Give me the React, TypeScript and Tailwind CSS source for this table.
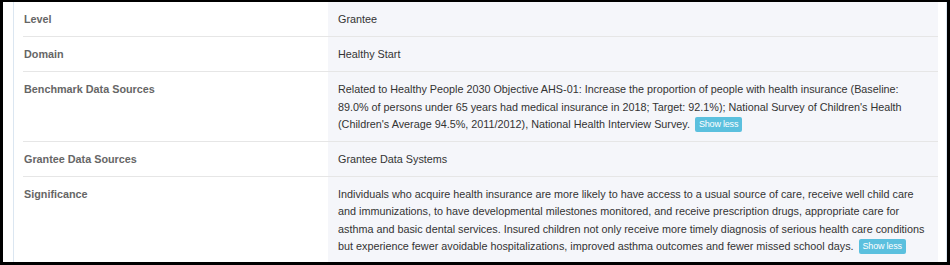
const rows: { label: string; value: string; more?: boolean }[] = [
  { label: "Level", value: "Grantee" },
  { label: "Domain", value: "Healthy Start" },
  {
    label: "Benchmark Data Sources",
    value:
      "Related to Healthy People 2030 Objective AHS-01: Increase the proportion of people with health insurance (Baseline: 89.0% of persons under 65 years had medical insurance in 2018; Target: 92.1%); National Survey of Children's Health (Children's Average 94.5%, 2011/2012), National Health Interview Survey.",
    more: true,
  },
  { label: "Grantee Data Sources", value: "Grantee Data Systems" },
  {
    label: "Significance",
    value:
      "Individuals who acquire health insurance are more likely to have access to a usual source of care, receive well child care and immunizations, to have developmental milestones monitored, and receive prescription drugs, appropriate care for asthma and basic dental services. Insured children not only receive more timely diagnosis of serious health care conditions but experience fewer avoidable hospitalizations, improved asthma outcomes and fewer missed school days.",
    more: true,
  },
];

function ShowLess() {
  return (
    <button className="ml-[5px] inline-block rounded-[2px] bg-[#5bc0de] px-[4px] py-[2px] align-middle text-[9px] leading-[11px] tracking-[-0.2px] text-white">
      Show less
    </button>
  );
}

export default function App() {
  return (
    <div className="h-[265px] w-[950px] overflow-hidden border-x-[3px] border-b-[3px] border-t-2 border-black bg-white pl-[10px] font-['Liberation_Sans',Arial,sans-serif] text-[10.8px] leading-[17.2px]">
      <div className="h-full border-x border-[#dbe6f1] pl-[9px] pr-[8px]">
        <table className="w-full border-collapse">
          <tbody>
            {rows.map((row) => (
              <tr key={row.label} className="border-b border-[#e6e6e6]">
                <td className="w-[305px] pb-2 pl-px pt-[9px] align-top font-bold text-[#666]">
                  {row.label}
                </td>
                <td className="bg-[#f5f6fa] pb-2 pl-[10px] pr-[8px] pt-[9px] align-top text-[#333]">
                  {row.value}
                  {row.more && <ShowLess />}
                </td>
              </tr>
            ))}
          </tbody>
        </table>
      </div>
    </div>
  );
}
